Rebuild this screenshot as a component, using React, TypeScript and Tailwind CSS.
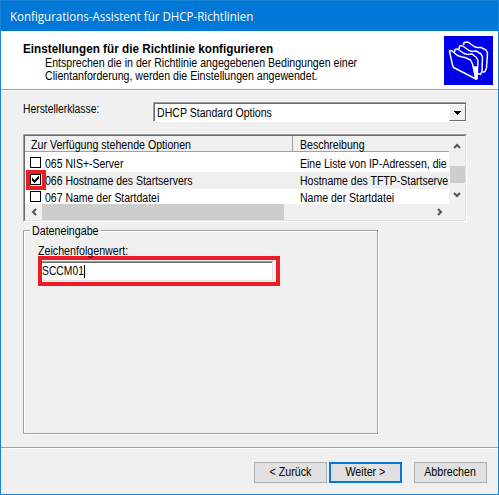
import type { ReactNode } from 'react';

function Tick() {
  return (
    <svg width="9" height="9" viewBox="0 0 9 9" shapeRendering="crispEdges">
      <path d="M1 3h1v1h1v1h1v-1h1v-1h1v-1h1v-1h1v3h-1v1h-1v1h-1v1h-1v1h-1v-1h-1v-1h-1z" fill="#000" />
    </svg>
  );
}

function Box({ checked }: { checked?: boolean }) {
  return (
    <span className="mb-[2px] flex h-[11px] w-[11px] shrink-0 items-center justify-center border border-black bg-white">
      {checked && <Tick />}
    </span>
  );
}

function Row({ name, desc, checked }: { name: string; desc: string; checked?: boolean }) {
  return (
    <div className={`relative flex h-[17px] shrink-0 items-center ${checked ? 'bg-[#efefef]' : ''}`}>
      <div className="flex w-[275px] shrink-0 items-center gap-1 pl-[5px]">
        <Box checked={checked} />
        <span className="mt-[2px] origin-left scale-x-[0.874]">{name}</span>
      </div>
      <span className="mt-[2px] origin-left scale-x-[0.876]">{desc}</span>
      {checked && <div className="absolute -top-[2px] left-[1px] h-5 w-5 border-4 border-[#ed1c24]" />}
    </div>
  );
}

function Arrow({ d }: { d: string }) {
  return (
    <svg width="8" height="8" viewBox="0 0 8 8" className="shrink-0">
      <path d={d} fill="none" stroke="#555" strokeWidth="2" />
    </svg>
  );
}

function Button({ children, primary }: { children: ReactNode; primary?: boolean }) {
  return (
    <button
      className={`flex h-[21px] w-[73px] items-center justify-center bg-[#e1e1e1] ${
        primary ? 'border-2 border-[#0078d7]' : 'border border-[#adadad]'
      }`}
    >
      <span className="scale-x-[0.89]">{children}</span>
    </button>
  );
}

function Folders() {
  const dots: string[] = [];
  for (let y = 1; y < 49; y += 2) {
    for (let x = 1; x < 49; x += 2) dots.push(`M${x} ${y}h1v1h-1z`);
  }
  return (
    <svg width="49" height="49" viewBox="0 0 49 49">
      <rect width="49" height="49" fill="#0000f0" />
      <path d={dots.join('')} fill="#000020" />
      <g stroke="#fff" strokeWidth="1.5" fill="none" strokeLinejoin="round">
        <path d="M19.5 9 20 6.5 24 6 30 10.5 33 11.5 37 11.500 42 14 43.500 17 42.500 32 41 35.500 38.500 36.500" />
        <path d="M15 13 15.500 10 18 9.500 25 14.500 28 15.500 32 15 37 18 38.500 21 38 35 36.500 38.500 34 37.500" />
        <path d="M10.500 16.500 11 13.500 13.500 13 20 17.500 24 18.500 28 18 32.500 21.500 34 25 33 42" />
        <path d="M5.500 15 7.500 14.500 13.500 19.500 18 21 21 21.500 26.500 24 28.500 28 32 43 9.500 31.500 8.500 29z" />
        <path d="M29.500 31 33 31 33 43 32 43z" fill="#fff" />
      </g>
    </svg>
  );
}

export default function App() {
  return (
    <div className="flex h-[495px] w-[499px] flex-col overflow-hidden border border-[#1883d7] bg-[#f0f0f0] font-['Liberation_Sans',sans-serif] text-[12px] leading-[13px] whitespace-nowrap text-black">
      <header className="flex h-[30px] shrink-0 items-center bg-[#0078d7] pl-[9px] font-['Open_Sans',sans-serif] text-[12px] text-white">
        <span className="origin-left scale-x-[0.96]">Konfigurations-Assistent für DHCP-Richtlinien</span>
      </header>

      <section className="flex h-[60px] shrink-0 justify-between border-b border-white bg-white pt-[5px] pr-[5px] pl-[22px] shadow-[inset_0_-1px_0_#a0a0a0]">
        <div className="pt-[5px]">
          <h1 className="h-[15px] origin-left scale-x-[0.977] leading-[16px] font-bold">Einstellungen für die Richtlinie konfigurieren</h1>
          <div className="origin-left scale-x-[0.884] pt-px pl-[25px]">
            <p>Entsprechen die in der Richtlinie angegebenen Bedingungen einer</p>
            <p>Clientanforderung, werden die Einstellungen angewendet.</p>
          </div>
        </div>
        <Folders />
      </section>

      <main className="flex h-[356px] shrink-0 flex-col pl-[22px]">
        <div className="mt-[11px] flex h-5">
          <span className="w-[130px] shrink-0 origin-left scale-x-[0.86] pt-px">Herstellerklasse:</span>
          <div className="flex h-5 w-[314px] border border-t-[#a0a0a0] border-r-white border-b-white border-l-[#a0a0a0]">
            <div className="flex flex-1 items-center border-t border-l border-[#696969] bg-white pl-[2px]">
              <span className="flex-1 origin-left scale-x-[0.88] pt-px">DHCP Standard Options</span>
              <span className="flex h-[17px] w-[17px] items-center justify-center border border-t-white border-r-[#696969] border-b-[#696969] border-l-white bg-[#f0f0f0]">
                <svg width="7" height="4" viewBox="0 0 7 4" shapeRendering="crispEdges"><path d="M0 0h7L3.5 4z" /></svg>
              </span>
            </div>
          </div>
        </div>

        <div className="mt-[12px] h-[88px] w-[444px] border border-t-[#a0a0a0] border-r-white border-b-white border-l-[#a0a0a0]">
          <div className="flex h-full flex-col border border-t-[#696969] border-r-[#e3e3e3] border-b-[#e3e3e3] border-l-[#696969] bg-white">
            <div className="flex h-[68px]">
              <div className="flex w-[424px] flex-col overflow-hidden">
                <div className="flex h-4 shrink-0 items-center border-b border-[#a0a0a0] bg-[#f0f0f0]">
                  <div className="flex h-[15px] w-[268px] items-center border-r border-[#a0a0a0] pl-[6px]">
                    <span className="mt-[3px] origin-left scale-x-[0.885]">Zur Verfügung stehende Optionen</span>
                  </div>
                  <span className="mt-[3px] ml-[7px] origin-left scale-x-[0.88]">Beschreibung</span>
                </div>
                <div className="flex flex-1 flex-col pt-[3px]">
                  <Row name="065 NIS+-Server" desc="Eine Liste von IP-Adressen, die" />
                  <Row checked name="066 Hostname des Startservers" desc="Hostname des TFTP-Startserve" />
                  <Row name="067 Name der Startdatei" desc="Name der Startdatei" />
                </div>
              </div>
              <div className="flex w-4 flex-col items-center bg-[#f0f0f0] pt-[6px]">
                <Arrow d="M1 6 4 3 7 6" />
                <div className="mt-4 h-[17px] w-[15px] bg-[#cdcdcd]" />
                <div className="mt-2"><Arrow d="M1 2 4 5 7 2" /></div>
              </div>
            </div>
            <div className="flex flex-1 items-center bg-[#f0f0f0] pr-[21px] pl-[5px]">
              <Arrow d="M6 1 3 4 6 7" />
              <div className="mr-auto ml-1 h-full w-[242px] bg-[#cdcdcd]" />
              <Arrow d="M2 1 5 4 2 7" />
            </div>
          </div>
        </div>

        <fieldset className="relative mt-2 h-[204px] w-[355px] border border-[#a0a0a0] pt-[14px] pl-[14px] shadow-[1px_1px_0_#fff,inset_1px_1px_0_#fff]">
          <div className="absolute -top-[6px] left-[6px] h-[13px] w-[71px] bg-[#f0f0f0] pl-[2px]">
            <span className="inline-block origin-left scale-x-[0.89]">Dateneingabe</span>
          </div>
          <div className="h-[11px] origin-left scale-x-[0.89]">Zeichenfolgenwert:</div>
          <div className="h-[30px] w-[242px] border-4 border-[#ed1c24]">
            <div className="mt-[1px] flex h-5 w-[231px] items-center border-t border-r border-b border-t-[#a0a0a0] border-r-[#e3e3e3] border-b-[#e3e3e3] bg-white shadow-[inset_0_1px_0_#696969]">
              <div className="w-[42px]"><span className="inline-block origin-left scale-x-[0.86]">SCCM01</span></div>
              <i className="h-[13px] w-px bg-black" />
            </div>
          </div>
        </fieldset>
      </main>

      <footer className="flex flex-1 items-start border-t border-[#a0a0a0] pt-[14px] pl-[253px] shadow-[inset_0_1px_0_#fff]">
        <Button>&lt; Zurück</Button>
        <div className="ml-[2px]"><Button primary>Weiter &gt;</Button></div>
        <div className="ml-3"><Button>Abbrechen</Button></div>
      </footer>
    </div>
  );
}
